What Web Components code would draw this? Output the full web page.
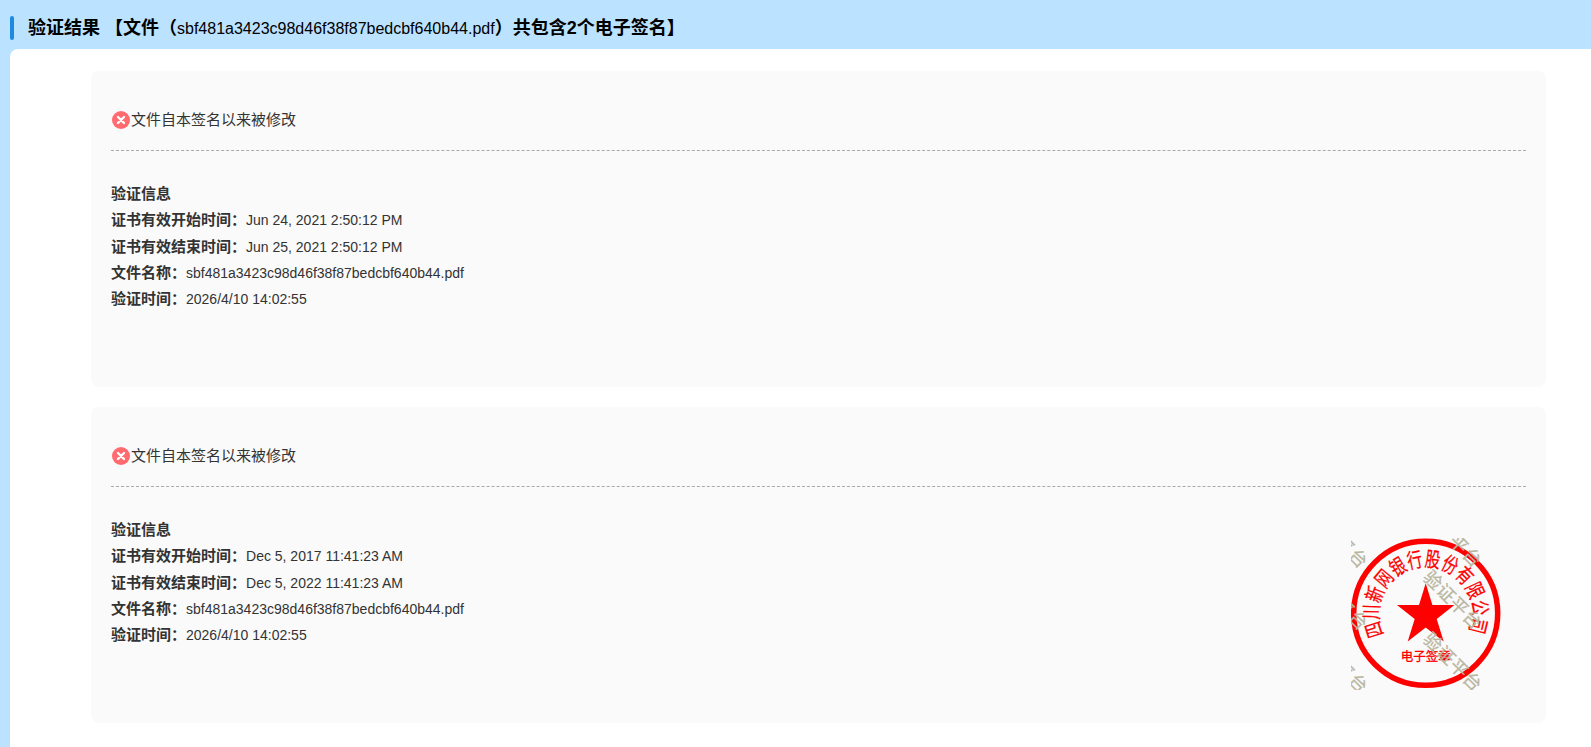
<!DOCTYPE html>
<html lang="zh">
<head>
<meta charset="utf-8">
<title>验证结果</title>
<style>
  html, body { margin: 0; padding: 0; background: #bbe2ff; }
  body { font-family: "Liberation Sans", "Noto Sans CJK SC", sans-serif; height: 747px; overflow: hidden; }
</style>
</head>
<body>
<verify-page>
  <span slot="title">验证结果 【文件（<span style="font-weight:400;font-size:16px">sbf481a3423c98d46f38f87bedcbf640b44.pdf</span>）共包含2个电子签名】</span>
  <sign-card start="Jun 24, 2021 2:50:12 PM" end="Jun 25, 2021 2:50:12 PM" file="sbf481a3423c98d46f38f87bedcbf640b44.pdf" time="2026/4/10 14:02:55"></sign-card>
  <sign-card start="Dec 5, 2017 11:41:23 AM" end="Dec 5, 2022 11:41:23 AM" file="sbf481a3423c98d46f38f87bedcbf640b44.pdf" time="2026/4/10 14:02:55">
    <seal-stamp slot="seal"></seal-stamp>
  </sign-card>
</verify-page>

<script>
  // page shell: blue header plus the white rounded panel
  class VerifyPage extends HTMLElement {
    constructor() {
      super();
      this.attachShadow({ mode: "open" }).innerHTML = `
        <style>
          :host { display: block; height: 747px; background: #bbe2ff; }
          .head { height: 49px; box-sizing: border-box; padding: 16px 0 0 10px; display: flex; }
          .bar { width: 4px; height: 24px; background: #1e88e5; border-radius: 2px; }
          .title { margin-left: 14px; font-size: 18px; line-height: 24px; font-weight: 700; color: #000; white-space: nowrap; }
          .panel { margin-left: 10px; height: 698px; box-sizing: border-box; background: #fff; border-radius: 8px 0 0 0;
            padding: 22px 45px 0 81px; display: flex; flex-direction: column; gap: 20px; }
        </style>
        <div class="head"><div class="bar"></div><div class="title"><slot name="title"></slot></div></div>
        <div class="panel"><slot></slot></div>
      `;
    }
  }

  // one signature result
  class SignCard extends HTMLElement {
    constructor() {
      super();
      this.attachShadow({ mode: "open" });
    }
    connectedCallback() {
      const a = (n) => this.getAttribute(n) || "";
      this.shadowRoot.innerHTML = `
        <style>
          :host { display: block; position: relative; height: 316px; box-sizing: border-box; background: #fafafa; border-radius: 8px; padding: 0 20px; color: #333; font-size: 15px; }
          .status { height: 80px; box-sizing: border-box; padding-top: 39px; display: flex; align-items: flex-start; border-bottom: 1px dashed #aaa; }
          .status svg { width: 18px; height: 18px; margin: 1px 1px 0 1px; flex: none; }
          .status span { line-height: 20px; }
          .info { margin-top: 30px; }
          .row { height: 26.25px; line-height: 26px; font-size: 14px; white-space: nowrap; }
          b { font-size: 15px; font-weight: 700; color: #333; }
          ::slotted([slot=seal]) { position: absolute; right: 45px; top: 131px; }
        </style>
        <div class="status">
          <svg viewBox="0 0 18 18"><circle cx="9" cy="9" r="9" fill="#ff6b6f"/><path d="M6 6l6 6M12 6l-6 6" stroke="#fff" stroke-width="2.4" stroke-linecap="round"/></svg>
          <span>文件自本签名以来被修改</span>
        </div>
        <div class="info">
          <div class="row"><b>验证信息</b></div>
          <div class="row"><b>证书有效开始时间：</b>${a("start")}</div>
          <div class="row"><b>证书有效结束时间：</b>${a("end")}</div>
          <div class="row"><b>文件名称：</b>${a("file")}</div>
          <div class="row"><b>验证时间：</b>${a("time")}</div>
        </div>
        <slot name="seal"></slot>
      `;
    }
  }

  // red seal, with the grey diagonal watermark over it
  class SealStamp extends HTMLElement {
    constructor() {
      super();
      const cx = 74.7, cy = 75.3;
      // the seal name is set round the ring, one glyph at a time so each can be stretched
      const name = [..."四川新网银行股份有限公司"].map((ch, i) => {
        const deg = -107.7 + i * 19.2;
        return `<text transform="translate(${cx} ${cy}) rotate(${deg}) translate(0 -54.5) scale(.95 1.3)" text-anchor="middle" y="6">${ch}</text>`;
      }).join("");
      const marks = [[108, 6, "平台"], [82, 42, "验证平台"], [82, 104, "验证平台"], [-6, 7, "平台"], [-6, 69, "平台"], [-6, 132, "平台"]];
      this.attachShadow({ mode: "open" }).innerHTML = `
        <style>
          :host { display: block; width: 150px; height: 152px; }
          svg { display: block; font-family: "Noto Sans CJK SC", sans-serif; }
        </style>
        <svg width="150" height="152" viewBox="0 0 150 152">
          <defs><clipPath id="box"><rect x="0" y="0" width="129" height="152"/></clipPath></defs>
          <circle cx="${cx}" cy="${cy}" r="72" fill="none" stroke="#ff0000" stroke-width="5.5"/>
          <g fill="#ff0000" stroke="#ff0000" stroke-width=".2" font-size="16">${name}</g>
          <polygon fill="#ff0000" transform="translate(${cx} ${cy})" points="0,-30 6.7,-8.3 28.7,-8.3 11,5.6 18,28.3 0,14.2 -18,28.3 -11,5.6 -28.7,-8.3 -6.7,-8.3"/>
          <text x="${cx}" y="122.5" fill="#ff0000" stroke="#ff0000" stroke-width=".3" font-size="12.5" text-anchor="middle">电子签章</text>
          <g clip-path="url(#box)" fill="#b9b6a0" stroke="#b9b6a0" stroke-width=".25" font-size="18" letter-spacing=".6">
            ${marks.map(([x, y, t]) => `<text transform="translate(${x} ${y}) rotate(45)" x="-9" y="6.5">${t}</text>`).join("")}
          </g>
        </svg>
      `;
    }
  }

  customElements.define("verify-page", VerifyPage);
  customElements.define("sign-card", SignCard);
  customElements.define("seal-stamp", SealStamp);
</script>
</body>
</html>
